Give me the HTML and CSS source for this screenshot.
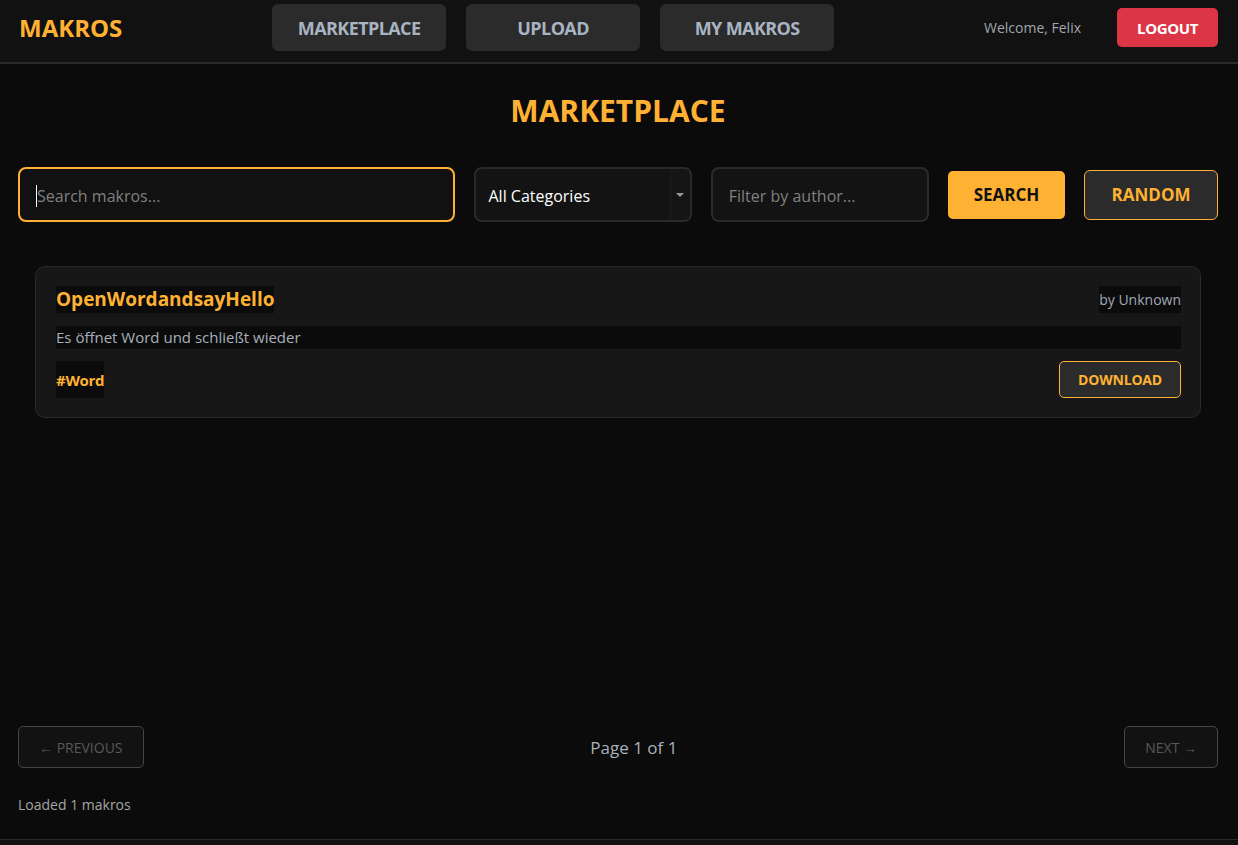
FILE: index.html
```html
<!DOCTYPE html>
<html lang="en">
<head>
<meta charset="utf-8">
<title>Makros Marketplace</title>
<link rel="stylesheet" href="styles.css">
</head>
<body>
<header class="topbar">
  <div class="logo">MAKROS</div>
  <nav class="nav">
    <a class="nav-btn">MARKETPLACE</a>
    <a class="nav-btn">UPLOAD</a>
    <a class="nav-btn">MY MAKROS</a>
  </nav>
  <div class="user">
    <span class="welcome">Welcome, Felix</span>
    <button class="logout">LOGOUT</button>
  </div>
</header>
<main class="main">
  <h1 class="page-title">MARKETPLACE</h1>
  <div class="filters">
    <div class="field field-search"><input class="input input-focus" placeholder="Search makros..."><span class="caret"></span></div>
    <div class="field select-wrap"><div class="input select">All Categories</div><span class="select-arrow"></span></div>
    <div class="field"><input class="input" placeholder="Filter by author..."></div>
    <button class="btn-search">SEARCH</button>
    <button class="btn-random">RANDOM</button>
  </div>
  <section class="list">
    <article class="card">
      <div class="card-head">
        <h3 class="card-title">OpenWordandsayHello</h3>
        <span class="card-author">by Unknown</span>
      </div>
      <p class="card-desc">Es öffnet Word und schließt wieder</p>
      <div class="card-foot">
        <span class="tag">#Word</span>
        <button class="btn-download">DOWNLOAD</button>
      </div>
    </article>
  </section>
  <div class="pager">
    <button class="pager-btn">← PREVIOUS</button>
    <span class="pager-info">Page 1 of 1</span>
    <button class="pager-btn">NEXT →</button>
  </div>
  <p class="status">Loaded 1 makros</p>
</main>
<footer class="footer"></footer>
</body>
</html>
```
FILE: styles.css
```css
* { box-sizing: border-box; }
html, body { margin: 0; padding: 0; }
body {
  background: #0b0b0b;
  font-family: "Open Sans", "Noto Sans", sans-serif;
  color: #aab3c0;
  min-height: 845px;
  display: flex;
  flex-direction: column;
}
button { font-family: inherit; cursor: pointer; }

.topbar {
  height: 64px;
  background: #111111;
  border-bottom: 2px solid #2a2a2a;
  display: flex;
  align-items: center;
  padding: 0 20px 7px 19px;
}
.logo {
  color: #ffb133;
  font-weight: 700;
  font-size: 24px;
}
.nav {
  flex: 1;
  display: flex;
  justify-content: center;
  gap: 20px;
}
.nav-btn {
  width: 174px;
  height: 47px;
  background: #2b2b2b;
  border-radius: 6px;
  color: #a9b4c3;
  font-weight: 700;
  font-size: 18px;
  letter-spacing: -0.6px;
  display: flex;
  align-items: center;
  justify-content: center;
}
.user {
  display: flex;
  align-items: center;
  gap: 36px;
}
.welcome {
  font-size: 14px;
  color: #a0a6ae;
}
.logout {
  width: 101px;
  height: 39px;
  background: #dc3545;
  border: none;
  border-radius: 5px;
  color: #ffffff;
  font-weight: 700;
  font-size: 15px;
  letter-spacing: -0.4px;
}

.main {
  flex: 1;
  padding: 0 20px 0 18px;
}
.page-title {
  margin: 29px 0 38px;
  text-align: center;
  color: #ffb133;
  font-size: 30px;
  line-height: 36px;
  font-weight: 700;
}
.filters {
  display: flex;
  align-items: center;
  gap: 19px;
}
.field {
  flex: 1 1 0;
  position: relative;
}
.field-search { flex: 2 1 0; }
.input {
  width: 100%;
  height: 55px;
  background: #131313;
  border: 2px solid #2a2a2a;
  border-radius: 8px;
  color: #ffffff;
  font-family: inherit;
  font-size: 16px;
  padding: 3px 16px 0;
  outline: none;
}
.input::placeholder { color: #808080; }
.input-focus { border-color: #ffb133; background: #111111; padding-left: 17px; }
.caret {
  position: absolute;
  left: 18px;
  top: 18px;
  width: 1px;
  height: 22px;
  background: #ffffff;
}
.select {
  display: flex;
  align-items: center;
  padding-left: 13px;
}
.select-arrow {
  position: absolute;
  right: 3px;
  top: 3px;
  bottom: 3px;
  width: 19px;
  background: #151515;
  border-left: 1px solid #1d1d1d;
}
.select-arrow::after {
  content: "";
  position: absolute;
  left: 5px;
  top: 23px;
  border-left: 4px solid transparent;
  border-right: 4px solid transparent;
  border-top: 4px solid #9a9a9a;
}
.btn-search {
  flex: 0 0 117px;
  height: 48px;
  background: #ffb133;
  border: none;
  border-radius: 5px;
  color: #111111;
  font-weight: 700;
  font-size: 17px;
}
.btn-random {
  flex: 0 0 134px;
  height: 50px;
  background: #2b2b2b;
  border: 1px solid #ffb133;
  border-radius: 6px;
  color: #ffb133;
  font-weight: 700;
  font-size: 17px;
}

.list {
  margin: 44px 0 40px;
  padding: 0 17px;
  min-height: 420px;
}
.card {
  background: #171717;
  border: 1px solid #2a2a2a;
  border-radius: 10px;
  padding: 19px 19px 19px 20px;
}
.card-head {
  display: flex;
  justify-content: space-between;
  align-items: stretch;
  height: 27px;
}
.card-title {
  margin: 0;
  background: #0b0b0b;
  color: #ffb133;
  font-size: 19px;
  font-weight: 700;
  line-height: 27px;
}
.card-author {
  background: #0b0b0b;
  font-size: 14px;
  line-height: 27px;
  color: #a0a9b6;
}
.card-desc {
  margin: 13px 0 12px;
  background: #0b0b0b;
  font-size: 15px;
  line-height: 23px;
  color: #a8b0bc;
}
.card-foot {
  display: flex;
  justify-content: space-between;
  align-items: stretch;
}
.tag {
  background: #0b0b0b;
  color: #ffb133;
  font-weight: 700;
  font-size: 15px;
  display: flex;
  align-items: center;
  letter-spacing: -0.3px;
}
.btn-download {
  width: 122px;
  height: 37px;
  background: #2b2b2b;
  border: 1px solid #ffb133;
  border-radius: 5px;
  color: #ffb133;
  font-weight: 700;
  font-size: 14px;
  letter-spacing: -0.2px;
}

.pager {
  display: flex;
  justify-content: space-between;
  align-items: center;
}
.pager-btn {
  height: 42px;
  padding: 0 20px;
  background: #121212;
  border: 1px solid #454545;
  border-radius: 5px;
  color: #585858;
  font-size: 14px;
}
.pager-info {
  font-size: 17px;
  color: #a9b1bd;
}
.status {
  margin: 27px 0 0;
  font-size: 14px;
  line-height: 20px;
  color: #a6a6a6;
}
.footer {
  height: 6px;
  border-top: 1px solid #2a2a2a;
  background: #111111;
}
```
